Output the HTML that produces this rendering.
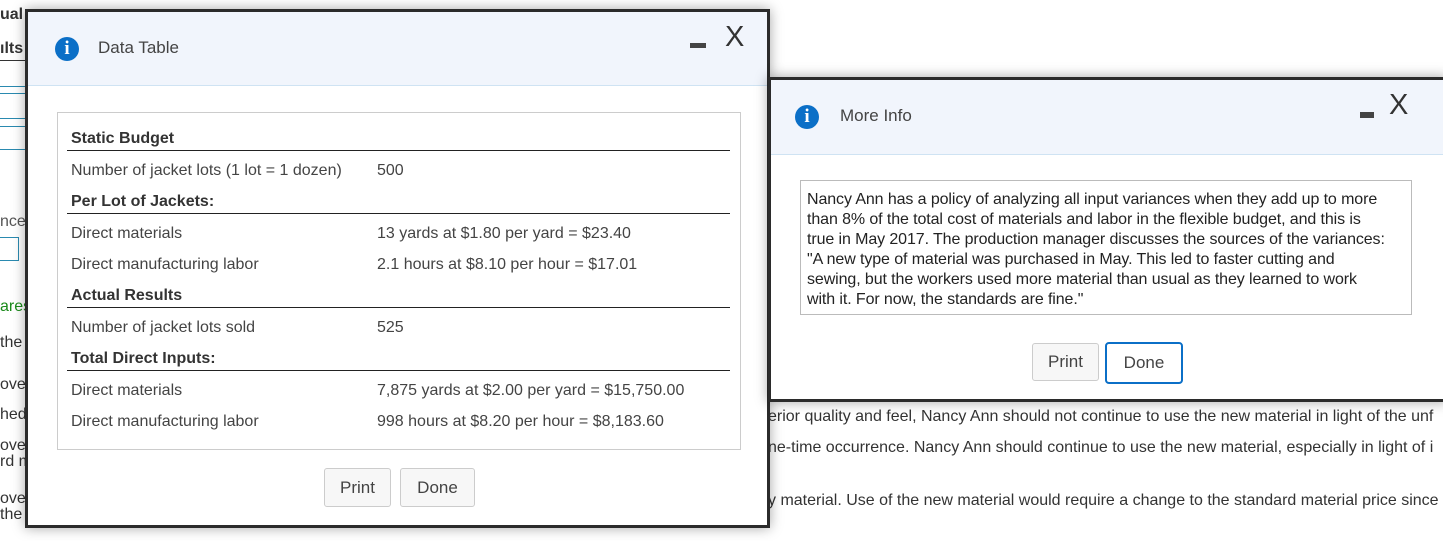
<!DOCTYPE html>
<html><head><style>
*{margin:0;padding:0;box-sizing:border-box}
body{width:1443px;height:541px;overflow:hidden;background:#fff;font-family:"Liberation Sans",sans-serif;color:#333;position:relative;font-size:16px}
.a{position:absolute;white-space:nowrap}
.modal{position:absolute;background:#fff;border:3px solid #2b2b2b;box-shadow:0 0 12px rgba(0,0,0,.35)}
.hdr{position:absolute;left:0;right:0;top:0;background:#f1f5fc;border-bottom:1px solid #cfe3f3}
.ic{position:absolute;width:24px;height:24px;border-radius:50%;background:#0b6fc7;color:#fff;font-weight:bold;font-family:"Liberation Serif",serif;font-size:19px;text-align:center;line-height:24px}
.btn{position:absolute;border:1px solid #ccc;border-radius:3px;background:#f7f7f7;text-align:center;font-size:17px;color:#444}
.row{position:absolute;left:13px;font-size:16px;color:#444}
.hd{font-weight:bold;color:#333}
.ul{position:absolute;left:9px;width:663px;height:1px;background:#222}
</style></head><body>
<div class="a" style="left:0;top:6px;font-weight:bold;font-size:16px">ual</div>
<div class="a" style="left:0;top:40px;font-weight:bold;font-size:16px">ılts</div>
<div class="a" style="left:0;top:60px;width:26px;height:1px;background:#333"></div>
<div class="a" style="left:0;top:86px;width:26px;height:1px;background:#2a8ab0"></div>
<div class="a" style="left:0;top:93px;width:26px;height:1px;background:#2a8ab0"></div>
<div class="a" style="left:0;top:118px;width:26px;height:1px;background:#2a8ab0"></div>
<div class="a" style="left:0;top:126px;width:26px;height:1px;background:#2a8ab0"></div>
<div class="a" style="left:0;top:149px;width:26px;height:1px;background:#2a8ab0"></div>
<div class="a" style="left:0;top:213px;color:#555">nce</div>
<div class="a" style="left:0;top:237px;width:19px;height:24px;border:1px solid #2a8ab0;border-left:none"></div>
<div class="a" style="left:0;top:298px;color:#1a8a1a">ares</div>
<div class="a" style="left:0;top:334px">the</div>
<div class="a" style="left:0;top:376px">oved</div>
<div class="a" style="left:0;top:406px">hed</div>
<div class="a" style="left:0;top:437px">oved</div>
<div class="a" style="left:0;top:453px">rd m</div>
<div class="a" style="left:0;top:490px">oved</div>
<div class="a" style="left:0;top:506px">the</div>
<div class="a" style="left:768px;top:408px">erior quality and feel, Nancy Ann should not continue to use the new material in light of the unf</div>
<div class="a" style="left:768px;top:439px">ne-time occurrence. Nancy Ann should continue to use the new material, especially in light of i</div>
<div class="a" style="left:768px;top:492px">y material. Use of the new material would require a change to the standard material price since</div>

<div class="modal" style="left:25px;top:9px;width:745px;height:519px">
 <div class="hdr" style="height:74px"></div>
 <div class="ic" style="left:27px;top:25px">i</div>
 <div class="a" style="left:70px;top:26px;font-size:17px;color:#444">Data Table</div>
 <div class="a" style="left:662px;top:31px;width:16px;height:5px;background:#444"></div>
 <div class="a" style="left:697px;top:9px;font-size:29px;color:#333">X</div>
 <div class="a" style="left:29px;top:100px;width:684px;height:338px;border:1px solid #ccc">
  <div class="row hd" style="top:17px">Static Budget</div><div class="ul" style="top:37px"></div>
  <div class="row" style="top:49px">Number of jacket lots (1 lot = 1 dozen)</div><div class="row" style="left:319px;top:49px">500</div>
  <div class="row hd" style="top:80px">Per Lot of Jackets:</div><div class="ul" style="top:100px"></div>
  <div class="row" style="top:112px">Direct materials</div><div class="row" style="left:319px;top:112px">13 yards at $1.80 per yard = $23.40</div>
  <div class="row" style="top:143px">Direct manufacturing labor</div><div class="row" style="left:319px;top:143px">2.1 hours at $8.10 per hour = $17.01</div>
  <div class="row hd" style="top:174px">Actual Results</div><div class="ul" style="top:194px"></div>
  <div class="row" style="top:206px">Number of jacket lots sold</div><div class="row" style="left:319px;top:206px">525</div>
  <div class="row hd" style="top:237px">Total Direct Inputs:</div><div class="ul" style="top:257px"></div>
  <div class="row" style="top:269px">Direct materials</div><div class="row" style="left:319px;top:269px">7,875 yards at $2.00 per yard = $15,750.00</div>
  <div class="row" style="top:300px">Direct manufacturing labor</div><div class="row" style="left:319px;top:300px">998 hours at $8.20 per hour = $8,183.60</div>
 </div>
 <div class="btn" style="left:296px;top:456px;width:67px;height:39px;line-height:37px">Print</div>
 <div class="btn" style="left:372px;top:456px;width:75px;height:39px;line-height:37px">Done</div>
</div>

<div class="modal" style="left:768px;top:77px;width:680px;height:325px">
 <div class="hdr" style="height:75px"></div>
 <div class="ic" style="left:24px;top:25px">i</div>
 <div class="a" style="left:69px;top:26px;font-size:17px;color:#444">More Info</div>
 <div class="a" style="left:589px;top:32px;width:14px;height:6px;background:#444"></div>
 <div class="a" style="left:618px;top:9px;font-size:29px;color:#333">X</div>
 <div class="a" style="left:29px;top:100px;width:612px;height:135px;border:1px solid #bbb;padding:9px 6px;font-size:16px;line-height:20px;color:#222;letter-spacing:-0.1px">Nancy Ann has a policy of analyzing all input variances when they add up to more<br>than 8% of the total cost of materials and labor in the flexible budget, and this is<br>true in May 2017. The production manager discusses the sources of the variances:<br>"A new type of material was purchased in May. This led to faster cutting and<br>sewing, but the workers used more material than usual as they learned to work<br>with it. For now, the standards are fine."</div>
 <div class="btn" style="left:261px;top:263px;width:67px;height:38px;line-height:36px">Print</div>
 <div class="btn" style="left:334px;top:262px;width:78px;height:42px;line-height:38px;border:2px solid #0b6fc7;background:#fff;border-radius:4px">Done</div>
</div>
</body></html>
